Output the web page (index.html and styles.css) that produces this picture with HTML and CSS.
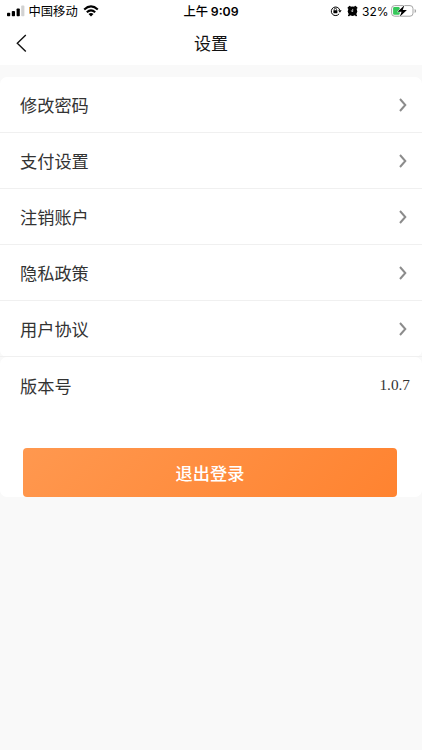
FILE: index.html
```html
<!DOCTYPE html>
<html lang="zh-CN">
<head>
<meta charset="utf-8">
<title>设置</title>
<link rel="stylesheet" href="styles.css">
</head>
<body>
<div class="status">
  <div class="status-left">
    <svg class="signal" width="18" height="12" viewBox="0 0 18 12"><rect x="0" y="7.8" width="3.2" height="3.4" rx=".8"/><rect x="4.8" y="5.9" width="3.2" height="5.3" rx=".8"/><rect x="9.6" y="3.4" width="3.2" height="7.8" rx=".8"/><rect class="dim" x="14.2" y="0.6" width="3.2" height="10.6" rx=".8"/></svg>
    <span class="carrier">中国移动</span>
    <svg class="wifi" width="16" height="12" viewBox="0 0 16 12"><path d="M1.2 4.5Q8-1.7 14.8 4.5M3.8 7.2Q8 3.5 12.2 7.2" fill="none" stroke="#000" stroke-width="2.1"/><path d="M8 11.4 5.5 8.9Q8 6.9 10.5 8.9Z"/></svg>
  </div>
  <div class="clock">上午 <b>9:09</b></div>
  <div class="status-right">
    <svg width="12" height="12" viewBox="0 0 12 12"><path d="M9.1 8.8A4.3 4.3 0 1 1 9.7 5" fill="none" stroke="#000" stroke-width="1"/><path d="M8.1 5.2h3.6L9.9 7.8Z"/><rect x="3.4" y="5.2" width="4" height="3" rx=".4"/><path d="M4.2 5.4V4.5a1.2 1.2 0 0 1 2.4 0v.9" fill="none" stroke="#000" stroke-width=".8"/></svg>
    <svg class="alarm" width="11" height="12" viewBox="0 0 11 12"><circle cx="5.5" cy="6.3" r="4.7"/><path d="M1.4 3 2.9 1.7M8.1 1.7 9.6 3M2.5 9.5 1.8 10.4M8.5 9.5l.7.9" stroke="#000" stroke-width="1.7" stroke-linecap="round"/><path d="M5.7 3.9v2.7L3.9 5.7" fill="none" stroke="#fff" stroke-width=".7"/></svg>
    <span class="percent">32%</span>
    <svg class="battery" width="26" height="14" viewBox="0 0 26 14"><rect x=".6" y="1.6" width="21.4" height="10.6" rx="3" fill="#fff" stroke="#a5a5a5"/><path d="M23.6 5v4q1.5-.5 1.5-2t-1.5-2" fill="#a5a5a5"/><rect x="2.1" y="3.1" width="6.6" height="7.6" rx="1.2" fill="#35c759"/><path d="M13.4 1.2 6.6 7.7h4L8.8 12.7l7.1-6.6h-4.2Z" stroke="#fff" stroke-width="1" paint-order="stroke"/></svg>
  </div>
</div>
<header class="nav">
  <svg class="back" width="12" height="20" viewBox="0 0 12 20"><path d="M10.8 2 2.3 10.3l8.5 8.2" fill="none" stroke="#111" stroke-width="1.4"/></svg>
  <h1>设置</h1>
</header>
<main>
  <ul class="card menu">
    <li><span>修改密码</span><svg width="8" height="14" viewBox="0 0 8 14"><path d="m1 1 5.3 6L1 13"/></svg></li>
    <li><span>支付设置</span><svg width="8" height="14" viewBox="0 0 8 14"><path d="m1 1 5.3 6L1 13"/></svg></li>
    <li><span>注销账户</span><svg width="8" height="14" viewBox="0 0 8 14"><path d="m1 1 5.3 6L1 13"/></svg></li>
    <li><span>隐私政策</span><svg width="8" height="14" viewBox="0 0 8 14"><path d="m1 1 5.3 6L1 13"/></svg></li>
    <li><span>用户协议</span><svg width="8" height="14" viewBox="0 0 8 14"><path d="m1 1 5.3 6L1 13"/></svg></li>
  </ul>
  <section class="card about">
    <div class="version"><span>版本号</span><span class="number">1.0.7</span></div>
    <button class="logout">退出登录</button>
  </section>
</main>
</body>
</html>
```
FILE: styles.css
```css
* { box-sizing: border-box; }
body {
  margin: 0;
  min-height: 750px;
  background: #f9f9f9;
  color: #333;
  font-family: "Noto Sans CJK SC", sans-serif;
}
svg { display: block; flex: none; }
.status {
  display: grid;
  grid-template-columns: 1fr auto 1fr;
  align-items: center;
  height: 22px;
  padding: 0 5px 0 7px;
  background: #fff;
  color: #000;
  font-size: 12.3px;
  line-height: 22px;
}
.status-left, .status-right { display: flex; align-items: center; }
.status-right { justify-content: flex-end; }
.signal { margin-top: -1px; }
.signal .dim { fill: #d2d2d2; }
.carrier { margin-left: 3.5px; }
.wifi { margin-left: 5px; margin-top: -1px; }
.clock { margin-left: -2px; font-weight: 500; }
.clock b { font: 600 12.3px Inter, sans-serif; }
.alarm { margin-left: 5px; }
.percent { margin: 0 2.5px 0 4px; font: 12px Inter, sans-serif; }
.nav {
  display: flex;
  align-items: center;
  justify-content: center;
  position: relative;
  height: 43px;
  background: #fff;
}
.back { position: absolute; left: 15px; top: 11px; }
.nav h1 { margin: 0; color: #111; font-size: 17px; font-weight: 400; line-height: 41px; height: 43px; }
main { padding-top: 12px; }
.card { margin: 0; background: #fff; border-radius: 7px; }
.menu { padding: 0; list-style: none; font-size: 17.2px; }
.menu li {
  display: flex;
  align-items: center;
  justify-content: space-between;
  height: 56.1px;
  padding: 0 15px 0 20px;
  border-bottom: 1px solid #f0f0f0;
}
.menu span { margin-top: -1px; }
.menu path { fill: none; stroke: #8c8c8c; stroke-width: 2; }
.about { height: 139.5px; }
.version {
  display: flex;
  align-items: center;
  justify-content: space-between;
  height: 56px;
  padding: 0 12px 0 20px;
  font-size: 17.2px;
}
.number { font: 15.3px "Liberation Serif", serif; }
.logout {
  display: block;
  width: 374px;
  height: 49px;
  margin: 34.5px 0 0 23px;
  padding: 0;
  border: 0;
  border-radius: 4px;
  background: linear-gradient(135deg, #ff984f, #ff8330);
  color: #fff;
  font: 500 17.2px "Noto Sans CJK SC", sans-serif;
}
```
